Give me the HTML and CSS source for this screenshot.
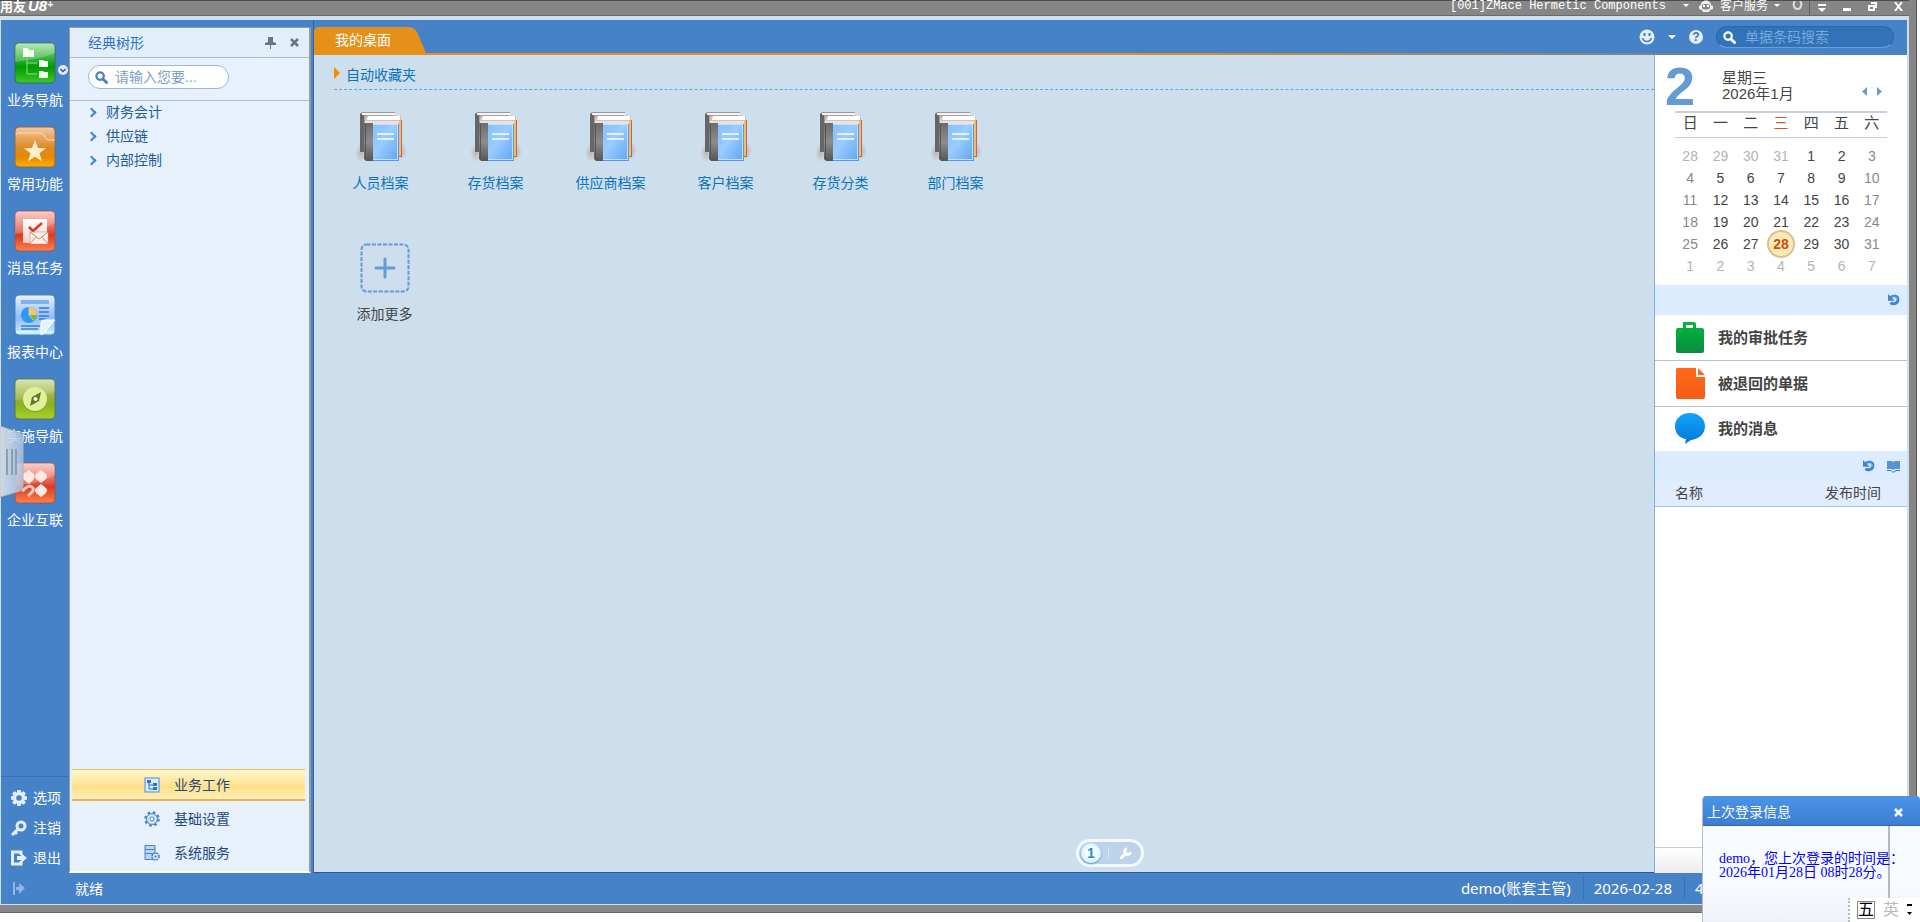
FILE: index.html
```html
<!DOCTYPE html>
<html lang="zh-CN">
<head>
  <meta charset="UTF-8">
  <meta name="viewport" content="width=device-width, initial-scale=1.0">
  <title>用友 U8+</title>
  <link rel="stylesheet" href="styles.css">
</head>
<body>
  <!-- shared gradients and symbols -->
  <svg class="defs" width="0" height="0" aria-hidden="true">
    <defs>
      <linearGradient id="gGreen" x2="0" y2="1"><stop offset="0" stop-color="#a4e3a0"/><stop offset=".5" stop-color="#14a51e"/><stop offset=".6" stop-color="#009a00"/><stop offset="1" stop-color="#3ec928"/></linearGradient>
      <linearGradient id="gOrange" x2="0" y2="1"><stop offset="0" stop-color="#f5c9a0"/><stop offset=".5" stop-color="#df8a28"/><stop offset=".75" stop-color="#e88800"/><stop offset="1" stop-color="#ffb000"/></linearGradient>
      <linearGradient id="gRed" x2="0" y2="1"><stop offset="0" stop-color="#fbc4bb"/><stop offset=".45" stop-color="#e8604c"/><stop offset=".6" stop-color="#dc3a22"/><stop offset="1" stop-color="#ff8248"/></linearGradient>
      <linearGradient id="gBlue" x2="0" y2="1"><stop offset="0" stop-color="#eaf4ff"/><stop offset=".55" stop-color="#8fbdf8"/><stop offset="1" stop-color="#cfeaff"/></linearGradient>
      <linearGradient id="gLime" x2="0" y2="1"><stop offset="0" stop-color="#d3dfa6"/><stop offset=".5" stop-color="#93b030"/><stop offset=".65" stop-color="#8cb41a"/><stop offset="1" stop-color="#a9d02c"/></linearGradient>
      <linearGradient id="gWhite" x2="0" y2="1"><stop offset="0" stop-color="#fff"/><stop offset="1" stop-color="#f3cfc8"/></linearGradient>
      <linearGradient id="gCover" x2="1" y2="1"><stop offset="0" stop-color="#86c0fa"/><stop offset=".45" stop-color="#9accff"/><stop offset="1" stop-color="#62a8f4"/></linearGradient>
      <linearGradient id="gSpine" x2="0" y2="1"><stop offset="0" stop-color="#6c6c6c"/><stop offset=".5" stop-color="#8c8c8c"/><stop offset="1" stop-color="#555"/></linearGradient>
      <linearGradient id="gBag" x2="0" y2="1"><stop offset="0" stop-color="#00b83a"/><stop offset="1" stop-color="#0a8c42"/></linearGradient>
      <linearGradient id="gDoc" x2="0" y2="1"><stop offset="0" stop-color="#fb6a1c"/><stop offset="1" stop-color="#f85c14"/></linearGradient>
      <linearGradient id="gTalk" x2="0" y2="1"><stop offset="0" stop-color="#12a4fa"/><stop offset="1" stop-color="#0276d8"/></linearGradient>
      <linearGradient id="gHandle"><stop offset="0" stop-color="#e8e8ea"/><stop offset="1" stop-color="#a9c3e2"/></linearGradient>
      <radialGradient id="gShade"><stop offset="0" stop-color="#b08a7a" stop-opacity=".5"/><stop offset="1" stop-color="#b08a7a" stop-opacity="0"/></radialGradient>
    </defs>
    <symbol id="books" viewBox="0 0 52 52">
      <ellipse cx="6" cy="42" rx="6" ry="9" fill="url(#gShade)"/>
      <ellipse cx="46" cy="40" rx="6" ry="9" fill="url(#gShade)"/>
      <path d="M5 3l2-2h32v40H5z" fill="#a8a09c"/>
      <path d="M5 3l2-1h2v39H5z" fill="#666"/>
      <path d="M7 1h33v3H7z" fill="#f4f4f4"/>
      <path d="M7 1h33v1H7z" fill="#999"/>
      <path d="M10 6l3-1h33v41H10z" fill="#d9c0b4"/>
      <path d="M9 5h31l1-1v1H9z" fill="#c9704c"/>
      <path d="M13 5h32v4H12z" fill="#fff"/>
      <path d="M42 9h5v37h-5z" fill="#eebc6a"/>
      <path d="M46 9h1v37h-5v-1h4z" fill="#c76445"/>
      <path d="M10 10h34v40H10z" fill="#e6e3e2"/>
      <path d="M9 12h9v38h-7l-2-2z" fill="url(#gSpine)"/>
      <path d="M10 13h1v36h-1z" fill="#555"/>
      <path d="M18 13h26v37H18z" fill="#5a98e4"/>
      <path d="M18 13h25v36H18z" fill="#bfe0ff"/>
      <path d="M18 14h24v34H18z" fill="url(#gCover)"/>
      <path d="M22 22h17v2H22zM22 27h17v2H22z" fill="#e2f1ff"/>
    </symbol>
    <symbol id="lens" viewBox="0 0 14 14">
      <circle cx="5.5" cy="5.5" r="4" fill="none" stroke="currentColor" stroke-width="2.4"/>
      <path d="M8.5 8.5l4 4" stroke="currentColor" stroke-width="3" stroke-linecap="round"/>
    </symbol>
    <symbol id="refresh" viewBox="0 0 14 14">
      <path d="M3 4C6 1.500 12 2 11.500 7c-.3 4.500-6 5.500-8.500 3" fill="none" stroke="#3f86d6" stroke-width="3.500"/>
      <path d="M0 0v8h8z" fill="#3f86d6"/>
      <path d="M5 4c3-1 6 .5 6 3" fill="none" stroke="#b6daf8" stroke-width="1"/>
    </symbol>
    <symbol id="gear" viewBox="0 0 16 16">
      <g fill="currentColor">
        <rect x="6" y="0" width="4" height="16" rx="1"/>
        <rect x="6" y="0" width="4" height="16" rx="1" transform="rotate(45 8 8)"/>
        <rect x="6" y="0" width="4" height="16" rx="1" transform="rotate(90 8 8)"/>
        <rect x="6" y="0" width="4" height="16" rx="1" transform="rotate(135 8 8)"/>
        <circle cx="8" cy="8" r="6"/>
      </g>
      <circle cx="8" cy="8" r="2.800" fill="#4682c8"/>
    </symbol>
  </svg>

  <div class="window">
    <!-- title bar -->
    <header class="titlebar">
      <span class="brand">用友<i>U8<sup>+</sup></i></span>
      <div class="title-tools">
        <span class="account">[001]ZMace Hermetic Components</span>
        <button class="tool" aria-label="切换账套"><svg width="6" height="4"><path d="M0 0h6L3 3z" fill="#fff"/></svg></button>
        <button class="tool service">
          <svg width="16" height="12" viewBox="0 0 16 12"><path d="M3 5C3-1 13-1 13 5l2 1v3l-3 1-1 2H5l-1-2-3-1V6z" fill="#eee"/><path d="M4 5l2-1h4l2 1v3c-1 2-7 2-8 0z" fill="#858585"/><path d="M5 5h2v2H5zM9 5h2v2H9z" fill="#fff"/></svg>
          客户服务
          <svg width="6" height="4"><path d="M0 0h6L3 3z" fill="#fff"/></svg>
        </button>
        <button class="tool" aria-label="皮肤"><svg width="11" height="10" viewBox="0 0 11 10"><path d="M3 0q-2 2-1 5c1 4 6 4 7 0q1-3-1-5" fill="none" stroke="#ddd" stroke-width="2"/></svg></button>
        <button class="tool divided" aria-label="更多"><svg width="8" height="8" viewBox="0 0 8 8"><path d="M0 0h8v2H0zM0 4h8L4 8z" fill="#fff"/></svg></button>
        <button class="tool low" aria-label="最小化"><svg width="8" height="3"><path d="M0 0h8v3H0z" fill="#fff"/></svg></button>
        <button class="tool" aria-label="还原"><svg width="9" height="9" viewBox="0 0 9 9"><path d="M3 0h6v6H7V2H3z" fill="#fff"/><path d="M1 4h5v4H1z" fill="none" stroke="#fff" stroke-width="2"/></svg></button>
        <button class="tool" aria-label="关闭"><svg width="9" height="9" viewBox="0 0 9 9"><path d="M1 0l7 9M8 0L1 9" stroke="#fff" stroke-width="2"/></svg></button>
      </div>
    </header>

    <div class="frame">
      <div class="columns">
        <!-- icon rail -->
        <nav class="rail">
          <button class="rail-item">
            <svg width="42" height="42" viewBox="0 0 42 42"><rect x="1" y="1" width="40" height="40" rx="4" fill="url(#gGreen)" stroke="#2f6f5f"/><path d="M1 20q26-3 40-9V5q0-4-4-4H5Q1 1 1 5z" fill="#fff" opacity=".22"/><path d="M9 6h5l1 2h5v7H9zM25 18h4l1 1h4v6h-9zM25 29h4l1 1h4v6h-9z" fill="#f2fff0"/><path d="M13 17v15h10M13 21h10" fill="none" stroke="#8fe08a"/></svg>
            业务导航
            <span class="more"><svg width="10" height="10" viewBox="0 0 10 10"><circle cx="5" cy="5" r="5" fill="#dce9f8"/><path d="M2.500 4L5 6.500 7.500 4" fill="none" stroke="#2c5f9f" stroke-width="1.500"/></svg></span>
          </button>
          <button class="rail-item">
            <svg width="42" height="42" viewBox="0 0 42 42"><rect x="1" y="1" width="40" height="40" rx="4" fill="url(#gOrange)" stroke="#8a6a4a"/><path d="M2 9q0-2 2-2h22q3 0 5 4 1 3 4 3h6" fill="none" stroke="#fbdcb4"/><path d="M21 14l3 8 8 .3-6.500 5 2.500 8-7-4.500-7 4.500 2.500-8-6.500-5 8-.3z" fill="#ffedcf"/></svg>
            常用功能
          </button>
          <button class="rail-item">
            <svg width="42" height="42" viewBox="0 0 42 42"><rect x="1" y="1" width="40" height="40" rx="4" fill="url(#gRed)" stroke="#8e5a66"/><path d="M1 24q26-3 40-11V5q0-4-4-4H5Q1 1 1 5z" fill="#fff" opacity=".2"/><path d="M9 9h24v24H9z" fill="url(#gWhite)"/><path d="M15 17l4 4 9-8" fill="none" stroke="#d23c28" stroke-width="2.500"/><path d="M16 22h18v12H16z" fill="#fff0ea" stroke="#d98878" stroke-width=".6"/><path d="M16 22l9 7 9-7M16 34l6-7M34 34l-6-7" fill="none" stroke="#b98a80"/></svg>
            消息任务
          </button>
          <button class="rail-item">
            <svg width="42" height="42" viewBox="0 0 42 42"><rect x="1" y="1" width="40" height="40" rx="4" fill="url(#gBlue)" stroke="#4f7fc0"/><path d="M2 38h38" stroke="#c0fff4" stroke-width="2"/><path d="M7 6h28v4H7z" fill="#7fb0f2"/><path d="M25 14h10M25 18h10M25 22h10M25 25h7M7 32h19M7 35h17" stroke="#3d7ad0" stroke-width="1.500"/><circle cx="15" cy="21" r="8" fill="#2f98ea"/><path d="M15 21v-8a8 8 0 0 1 8 8z" fill="#ffc069"/><path d="M15 21h8a8 8 0 0 1-3 6z" fill="#7fb93c"/><path d="M15 13v8l5 6" fill="none" stroke="#a8dcff" stroke-width=".8"/><path d="M27 41V29q0-3 3-3h11L30 39z" fill="#e4f1ff" stroke="#fff"/></svg>
            报表中心
          </button>
          <button class="rail-item">
            <svg width="42" height="42" viewBox="0 0 42 42"><rect x="1" y="1" width="40" height="40" rx="4" fill="url(#gLime)" stroke="#57784a"/><path d="M1 22q26-2 40-9V5q0-4-4-4H5Q1 1 1 5z" fill="#fff" opacity=".15"/><circle cx="21" cy="22" r="12" fill="#6f8d20" opacity=".6"/><circle cx="21" cy="21" r="12" fill="#dff19a"/><path d="M27 14l-2 9-9 5 2-9z" fill="#5f7a1a"/><circle cx="21.500" cy="21" r="2" fill="#fff"/></svg>
            实施导航
          </button>
          <button class="rail-item">
            <svg width="42" height="42" viewBox="0 0 42 42"><rect x="1" y="1" width="40" height="40" rx="4" fill="url(#gRed)" stroke="#8e5a66"/><path d="M1 24q26-3 40-11V5q0-4-4-4H5Q1 1 1 5z" fill="#fff" opacity=".2"/><path d="M15 8l5 4q1 3 0 5l-5 5-6-5q-1-3 0-5zM27 8l5 4q2 2 0 5l-5 4-5-4q-2-3 0-5zM27 22l5 4q2 2 0 5l-5 4-5-4q-2-3 0-5z" fill="#ffe9e4"/><path d="M8 29l5-4q4-2 6 1 1 3-2 5l-3 3" fill="none" stroke="#f8c4ba" stroke-width="3"/></svg>
            企业互联
          </button>

          <div class="rail-foot">
            <button><svg width="16" height="16"><use href="#gear"/></svg>选项</button>
            <button><svg width="16" height="16" viewBox="0 0 16 16"><circle cx="10" cy="6" r="4" fill="none" stroke="currentColor" stroke-width="3"/><path d="M7 9l-6 6M4 12l2 2" stroke="currentColor" stroke-width="3"/></svg>注销</button>
            <button><svg width="16" height="16" viewBox="0 0 16 16"><path d="M10 5V2H1.500v12H10v-3" fill="none" stroke="currentColor" stroke-width="3"/><path d="M6 6h4V3l6 5-6 5v-3H6z" fill="currentColor"/></svg>退出</button>
          </div>
          <!-- pull-out handle over the rail -->
          <button class="handle" aria-label="展开"><svg width="24" height="72" viewBox="0 0 24 72"><path d="M0 0l20 7q3 1 3 4v50q0 3-3 4L0 71z" fill="url(#gHandle)" fill-opacity=".85" stroke="#b4b4b4"/><path d="M6 23h2v26H6zM11 23h2v26h-2zM15 23h2v26h-2z" fill="#8f9dac"/></svg></button>
        </nav>

        <!-- tree panel -->
        <aside class="tree">
          <div class="tree-head">
            <h2>经典树形</h2>
            <button aria-label="固定"><svg width="11" height="12" viewBox="0 0 11 12"><path d="M3 0h5v5l3 1v2H0V6l3-1zM5 8h1v4H5z" fill="#667683"/></svg></button>
            <button aria-label="关闭"><svg width="9" height="9" viewBox="0 0 9 9"><path d="M1 1l7 7M8 1L1 8" stroke="#667683" stroke-width="2.500"/></svg></button>
          </div>
          <div class="tree-search">
            <label class="pill">
              <svg width="13" height="13"><use href="#lens"/></svg>
              <input type="text" placeholder="请输入您要..." aria-label="搜索菜单">
            </label>
          </div>
          <ul class="tree-list">
            <li><a href="#">财务会计</a></li>
            <li><a href="#">供应链</a></li>
            <li><a href="#">内部控制</a></li>
          </ul>
          <div class="tree-tabs">
            <button class="active"><svg width="16" height="16" viewBox="0 0 16 16"><rect x="1" y="1" width="14" height="14" fill="#d8ebff" stroke="#4c8cd4"/><path d="M3 3h4v3H3zM9 6h4v3H9zM9 10h4v3H9z" fill="#2f74c4"/><path d="M5 6v6h4M5 8h4" fill="none" stroke="#2f74c4"/></svg>业务工作</button>
            <button><svg width="16" height="16" viewBox="0 0 16 16"><circle cx="8" cy="8" r="6.500" fill="none" stroke="#4c84bc" stroke-width="2.500" stroke-dasharray="2.600 2.500"/><circle cx="8" cy="8" r="5.500" fill="#cfe4f8" stroke="#4c84bc"/><circle cx="8" cy="8" r="2" fill="#fff" stroke="#4c84bc"/></svg>基础设置</button>
            <button><svg width="16" height="16" viewBox="0 0 16 16"><path d="M1 .500h10v14H1z" fill="#b8d5f2" stroke="#4c84bc"/><path d="M1 4.500h10M1 8.500h10" stroke="#4c84bc"/><circle cx="11.500" cy="11.500" r="3.500" fill="#cfe4f8" stroke="#4c84bc" stroke-width="1.500" stroke-dasharray="2 .8"/><circle cx="11.500" cy="11.500" r="1" fill="#2f6fb0"/></svg>系统服务</button>
          </div>
        </aside>

        <!-- workspace -->
        <div class="workspace">
          <div class="tabbar">
            <button class="tab"><svg width="113" height="28" viewBox="0 0 113 28"><path d="M0 28V5q0-5 5-5h89q6 0 9 5l9 21v2z" fill="#e69019"/></svg><span>我的桌面</span></button>
            <div class="bar-tools">
              <button aria-label="表情"><svg width="16" height="16" viewBox="0 0 16 16"><circle cx="8" cy="8" r="7.500" fill="#e3eefb"/><path d="M4.500 4h2v3h-2zM9.500 4h2v3h-2z" fill="#3f7cc4"/><path d="M3.500 9c1.500 4.500 7.500 4.500 9 0" fill="none" stroke="#3f7cc4" stroke-width="1.500"/></svg></button>
              <button aria-label="展开菜单"><svg width="8" height="4"><path d="M0 0h8L4 4z" fill="#fff"/></svg></button>
              <button class="help" aria-label="帮助">?</button>
              <label class="code-search">
                <svg width="13" height="13"><use href="#lens"/></svg>
                <input type="text" placeholder="单据条码搜索" aria-label="单据条码搜索">
              </label>
            </div>
          </div>

          <div class="panes">
            <main class="desktop">
              <h1>自动收藏夹</h1>
              <div class="shortcuts">
                <a href="#"><svg width="52" height="52"><use href="#books"/></svg>人员档案</a>
                <a href="#"><svg width="52" height="52"><use href="#books"/></svg>存货档案</a>
                <a href="#"><svg width="52" height="52"><use href="#books"/></svg>供应商档案</a>
                <a href="#"><svg width="52" height="52"><use href="#books"/></svg>客户档案</a>
                <a href="#"><svg width="52" height="52"><use href="#books"/></svg>存货分类</a>
                <a href="#"><svg width="52" height="52"><use href="#books"/></svg>部门档案</a>
              </div>
              <button class="add"><svg width="50" height="50" viewBox="0 0 50 50"><rect x="1.500" y="1.500" width="47" height="47" rx="5" fill="none" stroke="#649bd2" stroke-width="2" stroke-dasharray="4 1.500"/><path d="M25 16v18M16 25h18" stroke="#649bd2" stroke-width="3" stroke-linecap="round"/></svg>添加更多</button>
              <div class="pager">
                <button class="page">1</button>
                <button class="wrench" aria-label="设置"><svg width="12" height="12" viewBox="0 0 12 12"><path d="M1 11l5-5" stroke="#fff" stroke-width="3" stroke-linecap="round"/><path d="M7 1.500A3 3 0 1 0 10.500 5" fill="none" stroke="#fff" stroke-width="2.500"/></svg></button>
              </div>
            </main>

            <aside class="side">
              <div class="calendar">
                <div class="cal-head">
                  <strong>2</strong>
                  <div class="cal-date">星期三<br>2026年1月</div>
                  <button aria-label="上个月"><svg width="5" height="9"><path d="M5 0v9L0 4.500z" fill="#649bd2"/></svg></button>
                  <button aria-label="下个月"><svg width="5" height="9"><path d="M0 0v9l5-4.500z" fill="#649bd2"/></svg></button>
                </div>
                <table>
                  <thead>
                    <tr><th>日</th><th>一</th><th>二</th><th class="now">三</th><th>四</th><th>五</th><th>六</th></tr>
                  </thead>
                  <tbody>
                    <tr><td class="out">28</td><td class="out">29</td><td class="out">30</td><td class="out">31</td><td>1</td><td>2</td><td>3</td></tr>
                    <tr><td>4</td><td>5</td><td>6</td><td>7</td><td>8</td><td>9</td><td>10</td></tr>
                    <tr><td>11</td><td>12</td><td>13</td><td>14</td><td>15</td><td>16</td><td>17</td></tr>
                    <tr><td>18</td><td>19</td><td>20</td><td>21</td><td>22</td><td>23</td><td>24</td></tr>
                    <tr><td>25</td><td>26</td><td>27</td><td class="today"><span>28</span></td><td>29</td><td>30</td><td>31</td></tr>
                    <tr><td class="out">1</td><td class="out">2</td><td class="out">3</td><td class="out">4</td><td class="out">5</td><td class="out">6</td><td class="out">7</td></tr>
                  </tbody>
                </table>
              </div>
              <div class="strip"><button aria-label="刷新任务"><svg width="12" height="12"><use href="#refresh"/></svg></button></div>
              <ul class="tasks">
                <li><a href="#"><svg width="30" height="32" viewBox="0 0 30 32"><path fill-rule="evenodd" d="M8 0h11q2 0 2 2v4h6q2 0 2 2v21q0 2-2 2H3q-2 0-2-2V8q0-2 2-2h5zM11 3v3h7V3z" fill="url(#gBag)"/></svg>我的审批任务</a></li>
                <li><a href="#"><svg width="30" height="32" viewBox="0 0 30 32"><path d="M2 0h19v9h9v20q0 2-2 2H3q-2 0-2-2V1zM23 0l7 7h-7z" fill="url(#gDoc)"/></svg>被退回的单据</a></li>
                <li><a href="#"><svg width="30" height="32" viewBox="0 0 30 32"><path d="M15 0c9 0 15 6 15 13 0 8-6 13-14 14l-6 4 1-5C4 25 0 20 0 13 0 6 6 0 15 0z" fill="url(#gTalk)"/></svg>我的消息</a></li>
              </ul>
              <div class="strip">
                <button aria-label="刷新公告"><svg width="12" height="12"><use href="#refresh"/></svg></button>
                <button aria-label="公告"><svg width="13" height="13" viewBox="0 0 13 13"><path d="M0 1h5l1 1 2-1h5v8H8l-2 1-1-1H0z" fill="#5b93cf"/><path d="M0 10.500h4l2 2 3-2h4" fill="none" stroke="#3a78bd"/></svg></button>
              </div>
              <table class="notices">
                <thead><tr><th>名称</th><th>发布时间</th></tr></thead>
              </table>
              <div class="side-foot"></div>
            </aside>
          </div>
        </div>
      </div>

      <!-- status bar -->
      <footer class="status">
        <button aria-label="展开侧栏"><svg width="12" height="13" viewBox="0 0 12 13"><path d="M0 0h2v13H0zM3 5h3V1l6 5-6 6V8H3z" fill="#8fb5e4"/></svg></button>
        <span class="ready">就绪</span>
        <span class="cell">demo(账套主管)</span>
        <span class="cell">2026-02-28</span>
        <span class="cell last">4</span>
      </footer>
    </div>
  </div>

  <!-- last login popup -->
  <section class="popup">
    <header>
      <h2>上次登录信息</h2>
      <button aria-label="关闭"><svg width="9" height="9" viewBox="0 0 9 9"><path d="M1 1l7 7M8 1L1 8" stroke="#fff" stroke-width="2.500"/></svg></button>
    </header>
    <p>demo，您上次登录的时间是：<br>2026年01月28日 08时28分。</p>
    <div class="ime"><b>五</b><span>英</span><svg width="5" height="12" viewBox="0 0 5 12"><path d="M0 0h5v2H0zM0 8h5L2.500 11z" fill="#000"/></svg></div>
  </section>
</body>
</html>
```
FILE: styles.css
```css
* {
  box-sizing: border-box;
}
body {
  margin: 0;
  height: 100vh;
  overflow: hidden;
  background: #fff;
  font: 14px/16px "Liberation Sans", "Noto Sans CJK SC", sans-serif;
  color: #444;
}
button {
  padding: 0;
  border: none;
  background: none;
  font: inherit;
  color: inherit;
  cursor: pointer;
}
button svg, a svg {
  display: block;
  flex: none;
}
a {
  color: inherit;
  text-decoration: none;
}
ul {
  margin: 0;
  padding: 0;
  list-style: none;
}
h1, h2 {
  margin: 0;
  font-size: 14px;
  font-weight: normal;
}
input {
  min-width: 0;
  flex: 1;
  padding: 0;
  border: none;
  outline: none;
  background: none;
  font: inherit;
}
.defs {
  position: absolute;
}

/* outer window */
.window {
  display: flex;
  flex-direction: column;
  height: calc(100vh - 9px);
  margin-right: 3px;
  padding: 0 7px 7px 0;
  background: #868686;
  border-right: 1px solid #555;
  border-bottom: 1px solid #666;
}
.titlebar {
  display: flex;
  justify-content: space-between;
  height: 16px;
  border-top: 1px solid #4c4c4c;
  border-bottom: 1px solid #6a6a6a;
  color: #fff;
  line-height: 10px;
}
.brand {
  font-weight: bold;
  font-size: 13px;
}
.brand i {
  margin-left: 2px;
  font-size: 15px;
}
.brand sup {
  font-size: 10px;
  line-height: 0;
  vertical-align: 3px;
}
.title-tools {
  display: flex;
  align-items: flex-start;
  gap: 17px;
  padding-right: 6px;
  font-size: 12px;
}
.account {
  font-family: "Liberation Mono", monospace;
}
.tool {
  display: flex;
  align-items: center;
  height: 10px;
}
.tool.service {
  gap: 6px;
  margin: 0 -5px 0 -8px;
  white-space: nowrap;
}
.tool.divided {
  height: 14px;
  margin-left: -11px;
  padding-left: 8px;
  border-left: 1px solid #5f5f5f;
}
.tool.low {
  align-items: flex-end;
}

/* blue frame */
.frame {
  display: flex;
  flex-direction: column;
  flex: 1;
  min-height: 0;
  border: 1px solid #cfdfee;
  border-top-width: 4px;
  border-right-width: 2px;
  background: #4682c8;
}
.columns {
  display: flex;
  flex: 1;
  min-height: 0;
}

/* icon rail */
.rail {
  position: relative;
  display: flex;
  flex-direction: column;
  flex: none;
  width: 68px;
  padding-top: 22px;
  color: #fff;
}
.rail-item {
  position: relative;
  display: flex;
  flex-direction: column;
  align-items: center;
  gap: 8px;
  height: 84px;
}
.rail-item .more {
  position: absolute;
  top: 23px;
  right: 1px;
}
.rail-foot {
  margin-top: auto;
  border-top: 1px solid #3a6fb0;
  padding: 6px 0 0 10px;
}
.rail-foot button {
  display: flex;
  align-items: center;
  gap: 6px;
  height: 30px;
}
.rail-foot svg {
  color: #e4eefa;
}
.handle {
  position: absolute;
  left: -1px;
  top: 406px;
}

/* tree panel */
.tree {
  display: flex;
  flex-direction: column;
  flex: none;
  width: 242px;
  margin-top: 7px;
  border: 1px solid #9a9a9a;
  border-right-width: 2px;
  border-bottom: 2px solid #fff;
  background: #e6f1fb;
  color: #1f5c99;
}
.tree-head {
  display: flex;
  align-items: center;
  gap: 14px;
  height: 30px;
  padding: 0 10px 0 18px;
  border-bottom: 1px solid #a9bfd8;
  background: #e2effa;
}
.tree-head h2 {
  flex: 1;
  color: #2c72c8;
}
.tree-search {
  padding: 7px 18px 11px;
  border-bottom: 1px solid #a9bfd8;
}
.pill {
  display: flex;
  align-items: center;
  gap: 7px;
  width: 141px;
  height: 24px;
  padding: 0 6px;
  border: 1px solid #9bb8dc;
  border-radius: 12px;
  background: #fff;
  color: #4480c8;
}
.pill input::placeholder {
  color: #7fa0c8;
}
.tree-list {
  display: flex;
  flex-direction: column;
  gap: 2px;
}
.tree-list a {
  display: flex;
  align-items: center;
  gap: 11px;
  height: 22px;
  padding-left: 18px;
}
.tree-list a::before {
  content: "";
  width: 5px;
  height: 5px;
  border: solid #3c82dc;
  border-width: 2px 2px 0 0;
  transform: rotate(45deg);
}
.tree-tabs {
  display: flex;
  flex-direction: column;
  gap: 2px;
  margin-top: auto;
  padding: 0 4px 2px 2px;
  color: #1f4a80;
}
.tree-tabs button {
  display: flex;
  align-items: center;
  gap: 14px;
  height: 32px;
  padding-left: 72px;
}
.tree-tabs .active {
  border-top: 1px solid #f0c060;
  border-bottom: 2px solid #f0b050;
  background: linear-gradient(#fff6cc, #ffe08a 60%, #fff0bc);
}

/* workspace */
.workspace {
  display: flex;
  flex-direction: column;
  flex: 1;
  min-width: 0;
  margin-left: 2px;
  border-left: 1px solid #2d66a8;
}
.tabbar {
  display: flex;
  justify-content: space-between;
  height: 35px;
  padding-top: 7px;
  background: linear-gradient(to right, #e69019 50%, #7f8288 82%, #4682c8) bottom / 100% 2px no-repeat;
}
.tab {
  display: grid;
  align-items: center;
  color: #fff;
  text-align: left;
}
.tab > * {
  grid-area: 1 / 1;
}
.tab span {
  padding: 0 0 3px 21px;
}
.bar-tools {
  display: flex;
  align-items: center;
  gap: 13px;
  height: 20px;
  padding-right: 13px;
}
.help {
  width: 14px;
  height: 14px;
  border-radius: 7px;
  background: #e3eefb;
  color: #3a72b8;
  font: bold 12px/14px "Liberation Sans", sans-serif;
}
.code-search {
  display: flex;
  align-items: center;
  gap: 9px;
  width: 178px;
  height: 22px;
  padding: 0 6px;
  border: 1px solid #2f66a8;
  border-bottom-color: #6a9ed8;
  border-radius: 11px;
  background: #3272b8;
  color: #fff;
}
.code-search input::placeholder {
  color: #78a8dc;
}
.panes {
  display: flex;
  flex: 1;
  min-height: 0;
}

/* desktop */
.desktop {
  display: flex;
  flex-direction: column;
  flex: 1;
  background: #cddeed;
  border-bottom: 1px solid #2458a0;
  color: #0a74ba;
}
.desktop h1 {
  display: flex;
  gap: 6px;
  height: 35px;
  margin-left: 20px;
  padding-top: 12px;
  border-bottom: 1px dashed #62a8dc;
}
.desktop h1::before {
  content: "";
  height: 0;
  border: solid transparent;
  border-width: 6px 0 6px 6px;
  border-left-color: #f88a00;
}
.shortcuts {
  display: flex;
  flex-wrap: wrap;
  padding: 21px 0 0 9px;
}
.shortcuts a {
  display: flex;
  flex-direction: column;
  align-items: center;
  gap: 12px;
  width: 115px;
  height: 132px;
}
.add {
  display: flex;
  flex-direction: column;
  align-items: center;
  align-self: flex-start;
  gap: 13px;
  width: 115px;
  margin-left: 13px;
  color: #444;
}
.pager {
  display: flex;
  align-items: center;
  align-self: center;
  justify-content: space-between;
  width: 68px;
  height: 28px;
  margin: auto 0 5px 252px;
  padding: 0 9px 0 2px;
  border: 3px solid #f4f9ff;
  border-radius: 14px;
  background: #bcd3ea;
}
.page {
  width: 20px;
  height: 20px;
  border-radius: 10px;
  background: radial-gradient(#fff 30%, #b4e2ff);
  box-shadow: 0 1px 2px #3c94e4;
  color: #2288e0;
  font-weight: bold;
  line-height: 20px;
}
.wrench {
  padding-left: 11px;
  border-left: 1px solid #dce8f4;
}

/* right column */
.side {
  display: flex;
  flex-direction: column;
  flex: none;
  width: 253px;
  border-left: 1px solid #7faee0;
  background: #fff;
}
.calendar {
  height: 230px;
  padding: 5px 20px 0;
}
.cal-head {
  display: flex;
  height: 51px;
  margin-left: -10px;
  padding-right: 5px;
  align-items: center;
  gap: 10px;
  font-size: 15px;
}
.cal-head strong {
  width: 47px;
  color: #649bd2;
  font-size: 54px;
  line-height: 50px;
}
.cal-date {
  flex: 1;
  line-height: 16px;
}
.cal-head button {
  padding-top: 12px;
}
.calendar table {
  width: 212px;
  table-layout: fixed;
  border-spacing: 0;
  border-top: 2px solid #c5cfde;
  text-align: center;
}
.calendar th {
  height: 25px;
  padding: 0 0 5px;
  border-bottom: 1px solid #c5cfde;
  font-size: 15px;
  font-weight: normal;
}
.calendar th.now {
  color: #c85a28;
}
.calendar td {
  height: 22px;
  padding: 0;
}
.calendar tbody tr:first-child td {
  height: 29px;
  padding-top: 7px;
}
.calendar td:first-child, .calendar td:last-child {
  color: #888;
}
.calendar tbody td.out {
  color: #b4b4b4;
}
.today span {
  display: block;
  width: 28px;
  height: 28px;
  margin: -3px auto;
  border: 2px solid #d8c090;
  border-radius: 14px;
  background: #fdeab4;
  color: #c85018;
  font-weight: bold;
  line-height: 24px;
}
.strip {
  display: flex;
  align-items: center;
  justify-content: flex-end;
  gap: 12px;
  height: 30px;
  padding-right: 7px;
  background: #dcebfe;
}
.tasks a {
  display: flex;
  align-items: center;
  gap: 13px;
  height: 46px;
  padding-left: 20px;
  border-bottom: 1px solid #b0c4d4;
  font-size: 15px;
  font-weight: bold;
}
.tasks li:last-child a {
  height: 44px;
  border-bottom: none;
}
.notices {
  border-spacing: 0;
  border-bottom: 1px solid #a9c8e8;
  background: #e0edfe;
}
.notices th {
  height: 25px;
  padding: 0 26px 2px 20px;
  font-weight: normal;
  text-align: left;
}
.notices th:last-child {
  text-align: right;
}
.side-foot {
  height: 26px;
  margin-top: auto;
  border-top: 1px solid #c8c8d0;
  background: linear-gradient(#fff, #ececec);
}

/* status bar */
.status {
  display: flex;
  align-items: center;
  height: 31px;
  padding-left: 12px;
  color: #fff;
}
.ready {
  flex: 1;
  padding-left: 50px;
}
.cell {
  padding: 3px 12px 3px 10px;
  border-right: 1px solid #3a70b4;
  font: 15px/17px "Noto Sans", "Noto Sans CJK SC", sans-serif;
}
.cell.last {
  width: 222px;
  border: none;
}

/* popup */
.popup {
  position: absolute;
  right: 0;
  bottom: 0;
  display: flex;
  flex-direction: column;
  width: 218px;
  height: 126px;
  border-left: 1px solid #b8bcc8;
  border-radius: 4px 4px 0 0;
  background: linear-gradient(to right, transparent 185px, #b8b8bc 185px, #b8b8bc 187px, transparent 187px), linear-gradient(#f8fbff 70%, #eef2f8);
  overflow: hidden;
}
.popup header {
  display: flex;
  align-items: center;
  justify-content: space-between;
  height: 30px;
  padding: 3px 17px 0 4px;
  border-bottom: 1px solid #2a64b8;
  background: linear-gradient(#4a94e8, #3d7ed2);
  color: #fff;
}
.popup p {
  margin: 26px 0 0 16px;
  color: #00f;
  font: 14px/14px "Liberation Serif", "Noto Sans CJK SC", serif;
  white-space: nowrap;
}
.ime {
  display: flex;
  align-items: center;
  align-self: flex-end;
  gap: 8px;
  height: 24px;
  margin-top: auto;
  padding: 0 8px 0 7px;
  border-left: 2px dotted #bbb;
  background: #fff;
}
.ime b {
  border: 1px solid #888;
  color: #000;
  font-weight: normal;
}
.ime b, .ime span {
  font-size: 16px;
}
.ime span {
  color: #bbb;
}
```
